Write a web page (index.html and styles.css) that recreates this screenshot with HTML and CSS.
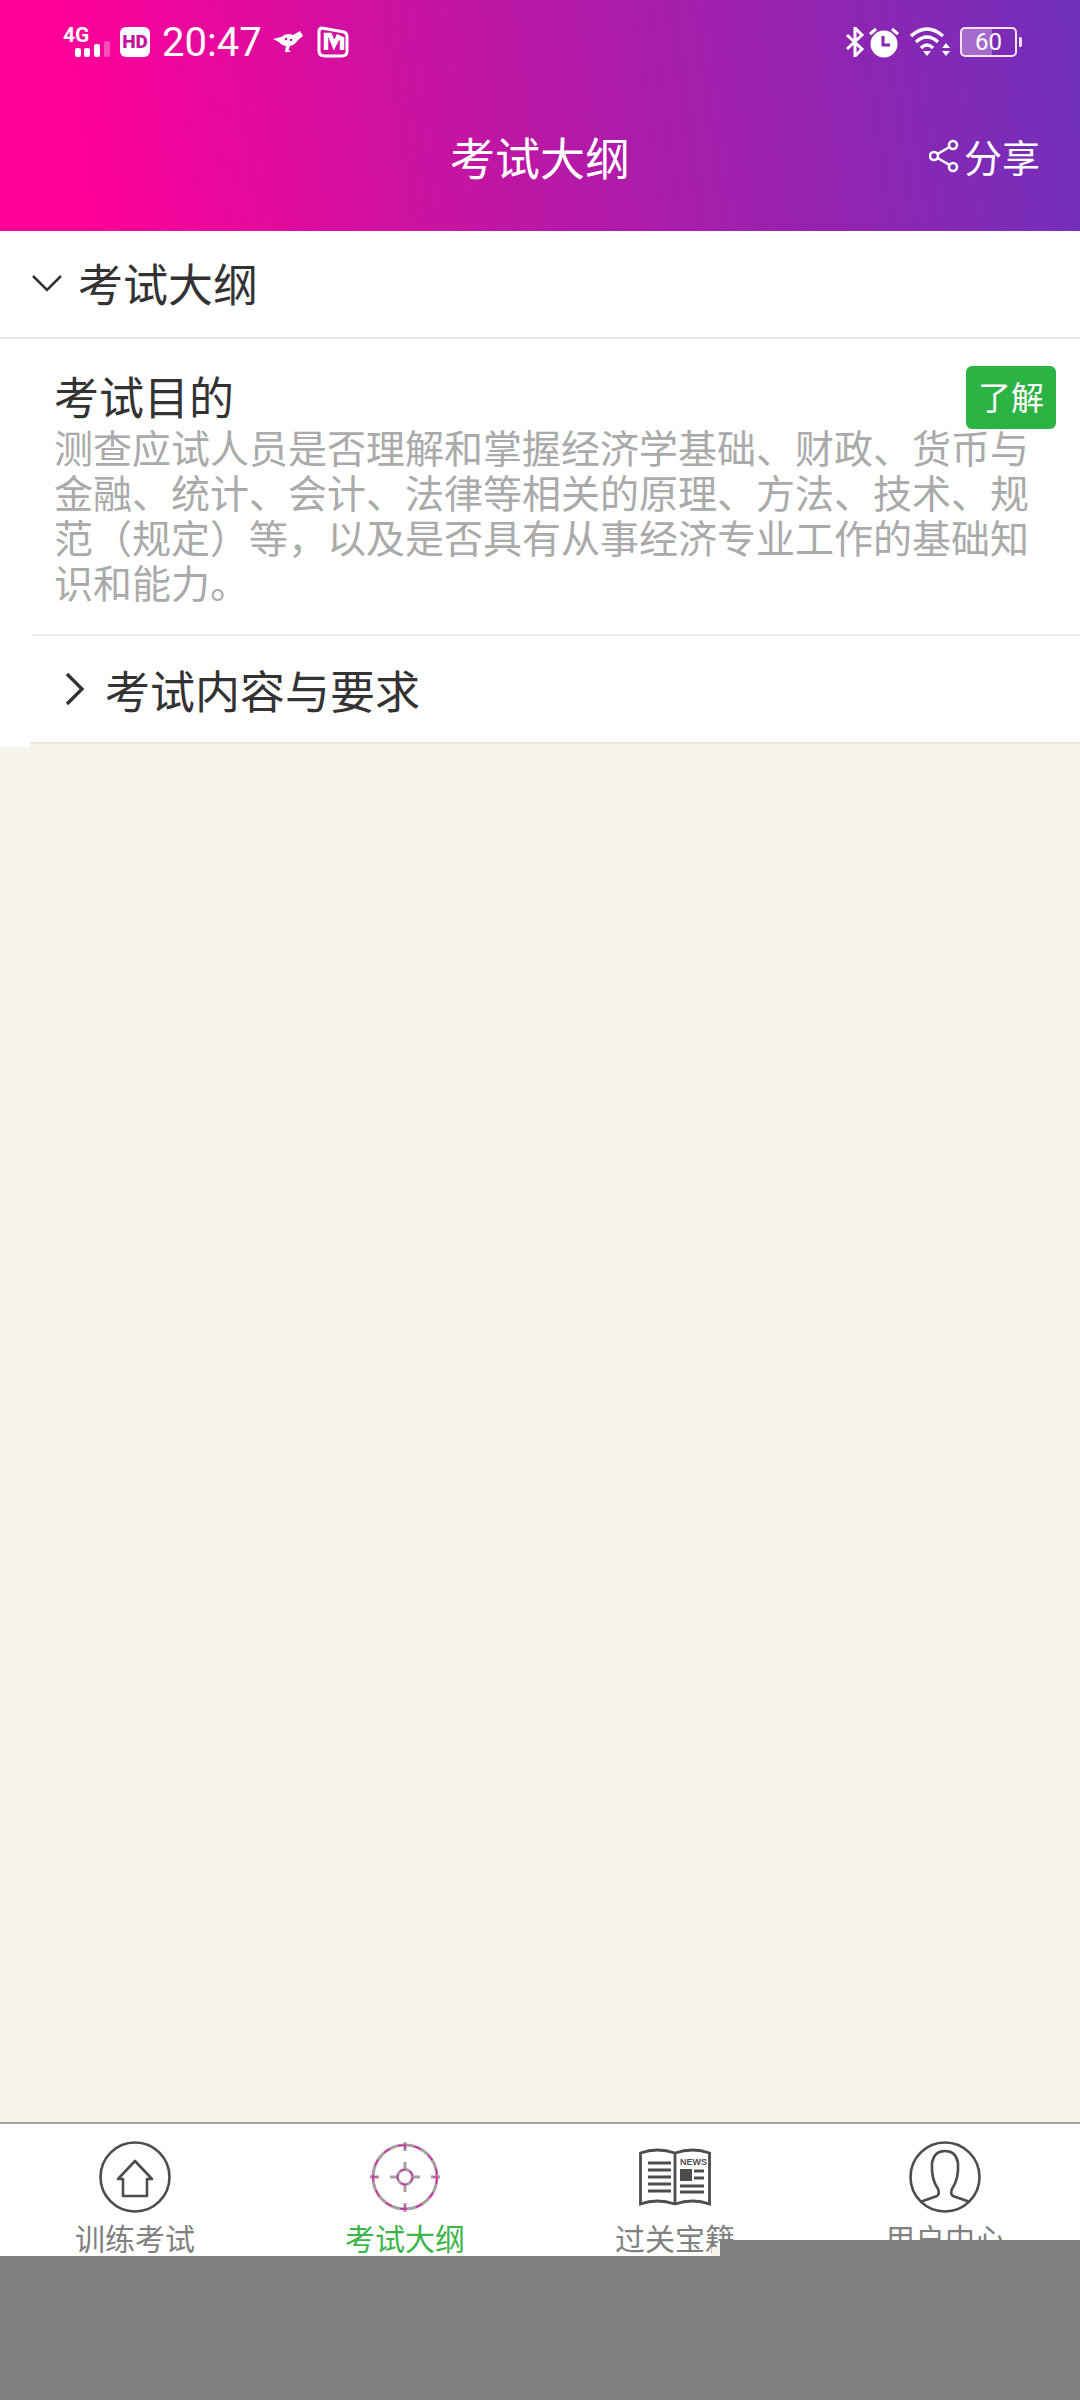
FILE: index.html
```html
<!DOCTYPE html>
<html lang="zh-CN">
<head>
	<meta charset="UTF-8">
	<title>考试大纲</title>
	<link rel="stylesheet" href="styles.css">
</head>
<body>
	<div class="page">
		<div class="header">
			<div class="status-bar">
				<div class="status-left">
					<svg class="ic-signal" width="50" height="36" viewBox="0 -4 50 36">
						<text x="0" y="16" class="net-text">4G</text>
						<rect x="12" y="22" width="6" height="9" rx="2" fill="#fff"/>
						<rect x="21" y="22" width="6" height="9" rx="2" fill="#fff"/>
						<rect x="31" y="18" width="6" height="13" rx="2" fill="#fff"/>
						<rect x="41" y="15" width="6" height="16" rx="2" fill="#fff" opacity=".3"/>
					</svg>
					<span class="hd-badge">HD</span>
					<span class="clock">20:47</span>
					<svg class="ic-bird" width="30" height="22" viewBox="0 0 30 22">
						<path d="M0 8 L8 6 Q14 1 20 4 L27 0 L30 5 L25 9 Q22 14 17 15 L15.500 19 L18 21 H12 L13 15 Q8 14 6 11 Z" fill="#fff"/>
						<circle cx="13" cy="8" r="1.300" fill="#c414a0"/>
						<circle cx="18" cy="9" r="1.300" fill="#c414a0"/>
					</svg>
					<svg class="ic-mango" width="32" height="32" viewBox="0 0 32 32">
						<path d="M5 2 L27 6 Q30 7 30 11 V25 Q30 30 25 30 H8 Q2 30 2 25 V6 Q2 2 5 2 Z" fill="none" stroke="#fff" stroke-width="3"/>
						<path d="M9 24 V9 L13 9 L17 19 L21 11 L25 13 V24" fill="none" stroke="#fff" stroke-width="4.500"/>
					</svg>
				</div>
				<div class="status-right">
					<svg width="20" height="30" viewBox="0 0 20 30">
						<path d="M2 8 L17 22 L10 29 V1 L17 8 L2 22" fill="none" stroke="#fff" stroke-width="3"/>
					</svg>
					<svg class="ic-alarm" width="32" height="32" viewBox="0 0 32 32">
						<circle cx="16" cy="18" r="13.500" fill="#fff"/>
						<path d="M15 10 V19 H22" fill="none" stroke="#8a25ae" stroke-width="3"/>
						<path d="M2 8 L8 3 M30 8 L24 3" stroke="#fff" stroke-width="3"/>
					</svg>
					<svg class="ic-wifi" width="42" height="30" viewBox="0 0 42 30">
						<path d="M1 9 Q17 -5 33 9" fill="none" stroke="#fff" stroke-width="3.400"/>
						<path d="M6 15 Q17 5 28 15" fill="none" stroke="#fff" stroke-width="3.400"/>
						<path d="M11 21 Q17 15 23 21" fill="none" stroke="#fff" stroke-width="3.400"/>
						<path d="M13 24 H21 L17 29 Z" fill="#fff"/>
						<path d="M36 16 L40 21 H32 Z M32 24 H40 L36 29 Z" fill="#fff"/>
					</svg>
					<div class="battery">
						<div class="battery-fill"></div>
						<span class="battery-num">60</span>
					</div>
				</div>
			</div>
			<div class="title-bar">
				<div></div>
				<h1 class="page-title">考试大纲</h1>
				<div class="share">
					<svg width="30" height="34" viewBox="0 0 30 34">
						<g fill="none" stroke="#fff" stroke-width="2.600">
							<circle cx="24" cy="6" r="4"/>
							<circle cx="5" cy="17" r="4"/>
							<circle cx="24" cy="28" r="4"/>
							<path d="M8.500 15 L20.500 8 M8.500 19 L20.500 26"/>
						</g>
					</svg>
					<span>分享</span>
				</div>
			</div>
		</div>

		<div class="outline">
			<div class="outline-head">
				<svg class="chev-down" width="30" height="18" viewBox="0 0 30 18">
					<path d="M1 2 L15 16 L29 2" fill="none" stroke="#333" stroke-width="2.600"/>
				</svg>
				<span>考试大纲</span>
			</div>
			<div class="topic">
				<div class="topic-name">考试目的</div>
				<span class="level-badge">了解</span>
				<p class="topic-desc">测查应试人员是否理解和掌握经济学基础、财政、货币与金融、统计、会计、法律等相关的原理、方法、技术、规范（规定）等，以及是否具有从事经济专业工作的基础知识和能力。</p>
			</div>
			<div class="sub-head">
				<svg width="20" height="34" viewBox="0 0 20 34">
					<path d="M2 2 L17 17 L2 32" fill="none" stroke="#333" stroke-width="3.400"/>
				</svg>
				<span>考试内容与要求</span>
			</div>
		</div>

		<div class="spacer"></div>

		<div class="tabbar">
			<div class="tab">
				<svg class="tab-icon" viewBox="0 0 72 72">
					<circle cx="36" cy="36" r="34.500" fill="none" stroke="#4d4d4d" stroke-width="2.600"/>
					<path d="M24 38 H19 L36 20 L53 38 H48 V55 H24 Z" fill="none" stroke="#4d4d4d" stroke-width="2.600" stroke-linejoin="round"/>
				</svg>
				<span class="tab-label">训练考试</span>
			</div>
			<div class="tab tab-active">
				<svg class="tab-icon" viewBox="0 0 72 72">
					<g fill="none" stroke="#a89ea0" stroke-width="3">
						<circle cx="36" cy="36" r="32"/>
						<circle cx="36" cy="36" r="7.500"/>
						<path d="M36 1 V10 M36 62 V71 M1 36 H10 M62 36 H71 M36 21 V28 M36 44 V51 M21 36 H28 M44 36 H51"/>
					</g>
					<g fill="none" stroke="#e010b0" stroke-width="1.200">
						<circle cx="36" cy="36" r="32" stroke-dasharray="7 9"/>
						<circle cx="36" cy="36" r="7.500" stroke-dasharray="6 4"/>
						<path d="M36 3 V8 M36 64 V69 M3 36 H8 M64 36 H69"/>
					</g>
				</svg>
				<span class="tab-label">考试大纲</span>
			</div>
			<div class="tab">
				<svg class="tab-icon" viewBox="0 0 72 72">
					<path d="M1.500 12 Q18 6 36 12 Q54 6 70.500 12 V63 Q54 57 36 63 Q18 57 1.500 63 Z M36 12 V63" fill="none" stroke="#4d4d4d" stroke-width="2.800"/>
					<path d="M9 22 H32 M9 29 H32 M9 36 H32 M9 43 H32 M9 50 H32" stroke="#4d4d4d" stroke-width="3"/>
					<text x="41" y="24" class="news-text">NEWS</text>
					<rect x="41" y="28" width="12" height="12" fill="#4d4d4d"/>
					<path d="M55 30 H65 M55 37 H65 M41 45 H65 M41 51 H65" stroke="#4d4d4d" stroke-width="3"/>
				</svg>
				<span class="tab-label">过关宝籍</span>
			</div>
			<div class="tab">
				<svg class="tab-icon" viewBox="0 0 72 72">
					<circle cx="36" cy="36" r="34.500" fill="none" stroke="#4d4d4d" stroke-width="2.600"/>
					<path d="M11 61 L28 55 Q31 53 29 48 Q22 38 23 22 Q25 10 36 10 Q47 10 49 22 Q50 38 43 48 Q41 53 44 55 L61 61" fill="none" stroke="#4d4d4d" stroke-width="2.600"/>
				</svg>
				<span class="tab-label">用户中心</span>
			</div>
		</div>

		<div class="mask-patch"></div>
		<div class="mask-right"></div>
		<div class="mask-bottom"></div>
	</div>
</body>
</html>
```

FILE: styles.css
```css
* {
	box-sizing: border-box;
}

body {
	margin: 0;
	font-family: "Noto Sans CJK SC", "Noto Sans", sans-serif;
}

.page {
	position: relative;
	width: 1080px;
	height: 2400px;
	display: flex;
	flex-direction: column;
	background-color: #f7f3ed;
	overflow: hidden;
}

/* header */
.header {
	height: 231px;
	display: flex;
	flex-direction: column;
	color: #fff;
	background: linear-gradient(82deg, #ff0099 8%, #c414a2 42%, #6f30bb 100%);
}

.status-bar {
	height: 86px;
	padding: 26px 63px 0 63px;
	display: flex;
	justify-content: space-between;
	align-items: flex-start;
}

.status-left, .status-right {
	display: flex;
	align-items: center;
	height: 32px;
}

.ic-signal {
	margin-top: -4px;
}

.net-text {
	font-family: Roboto, sans-serif;
	font-size: 21px;
	font-weight: 700;
	fill: #fff;
}

.hd-badge {
	width: 30px;
	height: 30px;
	margin-left: 7px;
	border-radius: 6px;
	background-color: #fff;
	color: #c414a0;
	font-family: Roboto, sans-serif;
	font-size: 19px;
	font-weight: 900;
	line-height: 30px;
	text-align: center;
}

.clock {
	margin-left: 12px;
	padding-top: 2px;
	font-family: Roboto, sans-serif;
	font-size: 40px;
	font-weight: 400;
	line-height: 32px;
}

.ic-bird {
	margin-left: 11px;
}

.ic-mango {
	margin-left: 14px;
}

.ic-alarm {
	margin-left: 3px;
}

.ic-wifi {
	margin-left: 10px;
}

.battery {
	position: relative;
	width: 57px;
	height: 30px;
	margin-left: 8px;
	border: 2.500px solid #f6e0f4;
	border-radius: 5px;
}

.battery::after {
	content: "";
	position: absolute;
	right: -7px;
	top: 8px;
	width: 3px;
	height: 10px;
	border-radius: 0 2px 2px 0;
	background-color: #f6e0f4;
}

.battery-fill {
	width: 56%;
	height: 100%;
	background-color: rgba(255, 255, 255, .3);
}

.battery-num {
	position: absolute;
	left: 0;
	right: 0;
	top: 0;
	font-family: Roboto, sans-serif;
	font-size: 24px;
	line-height: 27px;
	text-align: center;
}

.title-bar {
	flex: 1;
	display: grid;
	grid-template-columns: 1fr auto 1fr;
	align-items: center;
}

.page-title {
	margin: 0 0 4px;
	font-size: 45px;
	font-weight: 400;
	line-height: 60px;
}

.share {
	display: flex;
	align-items: center;
	justify-content: flex-end;
	gap: 5px;
	padding-right: 40px;
	margin-bottom: 6px;
	font-size: 38px;
	line-height: 50px;
}

/* outline tree */
.outline {
	padding-bottom: 3px;
	background-color: #fff;
}

.outline-head {
	height: 108px;
	display: flex;
	align-items: center;
	padding: 0 0 3px 32px;
	border-bottom: 2px solid #e8e8e8;
	color: #333;
	font-size: 45px;
}

.chev-down {
	margin-right: 16px;
}

.topic {
	position: relative;
	margin-left: 32px;
	padding: 35px 0 30px 22px;
	border-bottom: 2px solid #e8ece8;
}

.topic-name {
	color: #333;
	font-size: 45px;
	line-height: 44px;
}

.topic-desc {
	width: 985px;
	margin: 6px 0 0;
	color: #aaa;
	font-size: 39px;
	line-height: 45px;
}

.level-badge {
	position: absolute;
	top: 27px;
	left: 934px;
	width: 90px;
	height: 63px;
	border-radius: 6px;
	background-color: #2bb344;
	color: #fff;
	font-size: 33px;
	line-height: 60px;
	text-align: center;
}

.sub-head {
	height: 108px;
	margin-left: 30px;
	padding-left: 35px;
	display: flex;
	align-items: center;
	gap: 20px;
	border-bottom: 2px solid #ece8e0;
	box-shadow: 0 3px 0 #f7f3ed;
	color: #333;
	font-size: 45px;
}

.spacer {
	flex: 1;
}

/* bottom tabs */
.tabbar {
	height: 278px;
	padding-top: 17px;
	display: grid;
	grid-template-columns: repeat(4, 1fr);
	border-top: 2px solid #a5a39d;
	background-color: #fff;
}

.tab {
	display: flex;
	flex-direction: column;
	align-items: center;
}

.tab-icon {
	width: 72px;
	height: 72px;
}

.tab-label {
	margin-top: 2px;
	color: #808080;
	font-size: 30px;
	line-height: 44px;
}

.tab-active .tab-label {
	color: #3cb54a;
}

.news-text {
	font-family: "Liberation Sans", sans-serif;
	font-size: 9px;
	font-weight: 700;
	fill: #4d4d4d;
}

/* grey blocks over the bottom of the shot */
.mask-bottom {
	position: absolute;
	left: 0;
	right: 0;
	top: 2256px;
	bottom: 0;
	background-color: #808080;
}

.mask-right {
	position: absolute;
	left: 720px;
	right: 0;
	top: 2240px;
	bottom: 0;
	background-color: #808080;
}

.mask-patch {
	position: absolute;
	left: 712px;
	top: 2247px;
	width: 8px;
	height: 9px;
	background-color: #f7f3ed;
}
```
